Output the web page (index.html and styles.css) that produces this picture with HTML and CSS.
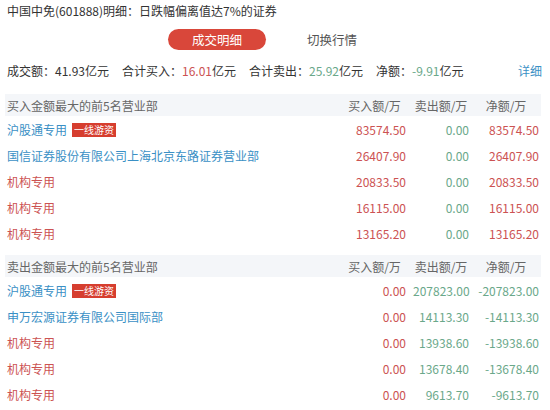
FILE: index.html
```html
<!DOCTYPE html>
<html lang="zh-CN">
<head>
    <meta charset="UTF-8">
    <meta name="viewport" content="width=device-width, initial-scale=1.0">
    <title>龙虎榜明细</title>
    <link rel="stylesheet" href="styles.css">
</head>
<body>
    <div class="title">中国中免(601888)明细：日跌幅偏离值达7%的证券</div>

    <div class="tabs">
        <span class="tab active">成交明细</span>
        <span class="tab">切换行情</span>
    </div>

    <div class="summary">
        <span>成交额：41.93亿元</span>
        <span>合计买入：<em class="red">16.01</em>亿元</span>
        <span>合计卖出：<em class="green">25.92</em>亿元</span>
        <span>净额：<em class="green">-9.91</em>亿元</span>
        <a class="more">详细</a>
    </div>

    <div class="section">
        <div class="head">
            <span class="name">买入金额最大的前5名营业部</span>
            <span>买入额/万</span>
            <span>卖出额/万</span>
            <span>净额/万</span>
        </div>
        <div class="row">
            <span class="name blue">沪股通专用<i class="tag">一线游资</i></span>
            <span class="red">83574.50</span>
            <span class="green">0.00</span>
            <span class="red">83574.50</span>
        </div>
        <div class="row">
            <span class="name blue">国信证券股份有限公司上海北京东路证券营业部</span>
            <span class="red">26407.90</span>
            <span class="green">0.00</span>
            <span class="red">26407.90</span>
        </div>
        <div class="row">
            <span class="name red">机构专用</span>
            <span class="red">20833.50</span>
            <span class="green">0.00</span>
            <span class="red">20833.50</span>
        </div>
        <div class="row">
            <span class="name red">机构专用</span>
            <span class="red">16115.00</span>
            <span class="green">0.00</span>
            <span class="red">16115.00</span>
        </div>
        <div class="row">
            <span class="name red">机构专用</span>
            <span class="red">13165.20</span>
            <span class="green">0.00</span>
            <span class="red">13165.20</span>
        </div>
    </div>

    <div class="section second">
        <div class="head">
            <span class="name">卖出金额最大的前5名营业部</span>
            <span>买入额/万</span>
            <span>卖出额/万</span>
            <span>净额/万</span>
        </div>
        <div class="row">
            <span class="name blue">沪股通专用<i class="tag">一线游资</i></span>
            <span class="red">0.00</span>
            <span class="green">207823.00</span>
            <span class="green">-207823.00</span>
        </div>
        <div class="row">
            <span class="name blue">申万宏源证券有限公司国际部</span>
            <span class="red">0.00</span>
            <span class="green">14113.30</span>
            <span class="green">-14113.30</span>
        </div>
        <div class="row">
            <span class="name red">机构专用</span>
            <span class="red">0.00</span>
            <span class="green">13938.60</span>
            <span class="green">-13938.60</span>
        </div>
        <div class="row">
            <span class="name red">机构专用</span>
            <span class="red">0.00</span>
            <span class="green">13678.40</span>
            <span class="green">-13678.40</span>
        </div>
        <div class="row">
            <span class="name red">机构专用</span>
            <span class="red">0.00</span>
            <span class="green">9613.70</span>
            <span class="green">-9613.70</span>
        </div>
    </div>
</body>
</html>
```

FILE: styles.css
```css
body {
    margin: 0;
    width: 550px;
    background: #fff;
    font-family: "Noto Sans CJK SC", "Noto Sans", sans-serif;
    font-size: 12px;
    color: #333;
}
em, i {
    font-style: normal;
}
.red {
    color: #cc5252;
}
.green {
    color: #6aa88a;
}
.blue {
    color: #3a90c5;
}
.title {
    height: 22px;
    line-height: 22px;
    padding-left: 7px;
}
.tabs {
    display: flex;
    gap: 17px;
    margin: 7px 0 0 168px;
}
.tab {
    width: 98px;
    height: 21px;
    line-height: 21px;
    text-align: center;
    font-size: 12.5px;
    color: #555;
    border-radius: 11px;
}
.tab.active {
    background: #d9473a;
    color: #fff;
}
.summary {
    display: flex;
    gap: 13px;
    height: 20px;
    line-height: 20px;
    margin-top: 11px;
    padding: 0 8px 0 7px;
}
.summary .more {
    margin-left: auto;
    color: #3a90c5;
}
.section {
    margin: 13px 9px 0 5px;
}
.section.second {
    margin-top: 9px;
}
.head, .row {
    display: grid;
    grid-template-columns: 338px 63px 7px 56px 4px 66px;
    align-items: center;
    white-space: nowrap;
}
.head span:nth-child(2), .row span:nth-child(2) { grid-column: 2; }
.head span:nth-child(3), .row span:nth-child(3) { grid-column: 4; }
.head span:nth-child(4), .row span:nth-child(4) { grid-column: 6; }
.head {
    height: 22px;
    background: #f4f6f9;
    color: #666;
}
.head span {
    text-align: center;
}
.head .name {
    text-align: left;
}
.row {
    height: 26px;
}
.row span {
    text-align: right;
}
.row .name {
    text-align: left;
}
.name {
    padding-left: 2px;
}
.tag {
    display: inline-block;
    margin-left: 5px;
    padding: 0 2px;
    height: 14px;
    line-height: 14px;
    font-size: 10px;
    background: #d63e2f;
    color: #fff;
    vertical-align: 1px;
}
```
